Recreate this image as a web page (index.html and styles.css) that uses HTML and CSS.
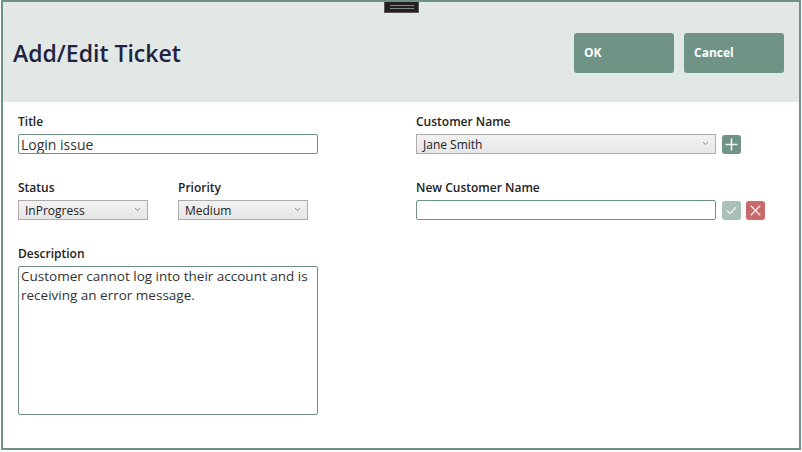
FILE: index.html
```html
<!DOCTYPE html>
<html lang="en">
<head>
    <meta charset="UTF-8">
    <title>Add/Edit Ticket</title>
    <link rel="stylesheet" href="styles.css">
</head>
<body>
    <div class="window">
        <div class="grip"><span></span><span></span></div>

        <div class="header">
            <h1 class="title">Add/Edit Ticket</h1>
            <div class="actions">
                <button class="btn">OK</button>
                <button class="btn">Cancel</button>
            </div>
        </div>

        <div class="form">
            <div class="column">
                <div class="field">
                    <label class="label">Title</label>
                    <input class="text-input" type="text" value="Login issue">
                </div>

                <div class="field-row">
                    <div class="field">
                        <label class="label">Status</label>
                        <div class="combo small">
                            <span>InProgress</span>
                            <svg class="chevron" width="7" height="5" viewBox="0 0 7 5"><path d="M1 1.2 L3.5 3.6 L6 1.2" fill="none" stroke="#888" stroke-width="1"/></svg>
                        </div>
                    </div>
                    <div class="field">
                        <label class="label">Priority</label>
                        <div class="combo small">
                            <span>Medium</span>
                            <svg class="chevron" width="7" height="5" viewBox="0 0 7 5"><path d="M1 1.2 L3.5 3.6 L6 1.2" fill="none" stroke="#888" stroke-width="1"/></svg>
                        </div>
                    </div>
                </div>

                <div class="field">
                    <label class="label">Description</label>
                    <textarea class="text-area">Customer cannot log into their account and is receiving an error message.</textarea>
                </div>
            </div>

            <div class="column">
                <div class="field">
                    <label class="label">Customer Name</label>
                    <div class="control-row">
                        <div class="combo wide">
                            <span>Jane Smith</span>
                            <svg class="chevron" width="7" height="5" viewBox="0 0 7 5"><path d="M1 1.2 L3.5 3.6 L6 1.2" fill="none" stroke="#888" stroke-width="1"/></svg>
                        </div>
                        <button class="icon-btn add">
                            <svg width="13" height="13" viewBox="0 0 13 13"><path d="M6.5 0.5 V12.5 M0.5 6.5 H12.5" stroke="#eef6f3" stroke-width="1.6"/></svg>
                        </button>
                    </div>
                </div>

                <div class="field">
                    <label class="label">New Customer Name</label>
                    <div class="control-row">
                        <input class="text-input" type="text" value="">
                        <button class="icon-btn confirm">
                            <svg width="11" height="9" viewBox="0 0 11 9"><path d="M1 4.8 L4 7.5 L10 1.2" fill="none" stroke="#eef3f1" stroke-width="1.3"/></svg>
                        </button>
                        <button class="icon-btn cancel">
                            <svg width="11" height="11" viewBox="0 0 11 11"><path d="M0.8 0.8 L10.2 10.2 M10.2 0.8 L0.8 10.2" stroke="#fbeaea" stroke-width="1.4"/></svg>
                        </button>
                    </div>
                </div>
            </div>
        </div>
    </div>
</body>
</html>
```

FILE: styles.css
```css
body {
    margin: 0;
    padding: 0;
    background-color: #fff;
    font-family: 'Open Sans', 'Noto Sans', sans-serif;
    color: #222;
}

.window {
    position: relative;
    margin-left: 1px;
    width: 796px;
    height: 446px;
    border: 2px solid #6f9285;
    background-color: #fff;
}

/* ручка перетаскивания сверху */
.grip {
    position: absolute;
    top: 0;
    left: 381px;
    width: 35px;
    height: 11px;
    background-color: #222;
    border: 1px solid #555;
    border-top: none;
    box-sizing: border-box;
    display: flex;
    flex-direction: column;
    justify-content: center;
    align-items: center;
    gap: 2px;
}

.grip span {
    display: block;
    width: 24px;
    height: 1px;
    background-color: #888;
}

.header {
    height: 100px;
    background-color: #e2e8e6;
    display: flex;
    align-items: center;
    justify-content: space-between;
    padding: 0 15px 0 10px;
}

.title {
    margin: 2px 0 0;
    font-size: 23px;
    font-weight: 600;
    color: #1f2340;
}

.actions {
    display: flex;
    gap: 10px;
    margin-top: 1px;
}

.btn {
    width: 100px;
    height: 40px;
    background-color: #6f9385;
    color: #fff;
    border: none;
    border-radius: 3px;
    font-family: inherit;
    font-size: 12px;
    font-weight: 700;
    text-align: left;
    padding: 0 10px;
}

.form {
    display: flex;
    padding: 12px 0 0 15px;
    gap: 98px;
}

.column {
    display: flex;
    flex-direction: column;
    flex: none;
}

.field {
    display: flex;
    flex-direction: column;
    margin-bottom: 26px;
}

.field-row {
    display: flex;
    gap: 30px;
}

.label {
    font-size: 12px;
    font-weight: 600;
    line-height: 16px;
    margin-bottom: 4px;
    color: #222;
}

.text-input {
    flex: none;
    width: 300px;
    height: 20px;
    box-sizing: border-box;
    border: 1px solid #6f9285;
    border-radius: 2px;
    padding: 0 2px;
    font-family: inherit;
    font-size: 14px;
    color: #333;
    outline: none;
}

.text-area {
    width: 300px;
    height: 149px;
    box-sizing: border-box;
    border: 1px solid #6f9285;
    border-radius: 2px;
    padding: 0 2px;
    margin: 0;
    font-family: inherit;
    font-size: 13.5px;
    line-height: 19px;
    color: #333;
    resize: none;
    outline: none;
}

.combo {
    flex: none;
    position: relative;
    height: 20px;
    box-sizing: border-box;
    border: 1px solid #acacac;
    background: linear-gradient(#f2f2f2, #e6e6e6);
    display: flex;
    align-items: center;
    padding-left: 6px;
    font-size: 12px;
    color: #222;
}

.combo.small {
    width: 130px;
}

.combo.wide {
    width: 300px;
}

.chevron {
    position: absolute;
    right: 6px;
    top: 6px;
}

.control-row {
    display: flex;
    align-items: center;
    gap: 6px;
}

.icon-btn {
    flex: none;
    width: 19px;
    height: 19px;
    padding: 0;
    border: none;
    border-radius: 3px;
    display: flex;
    align-items: center;
    justify-content: center;
}

.icon-btn.add {
    background-color: #6f9385;
}

.icon-btn.confirm {
    background-color: #a9c0b6;
}

.icon-btn.cancel {
    background-color: #c96a6a;
    margin-left: -1px;
}
```
